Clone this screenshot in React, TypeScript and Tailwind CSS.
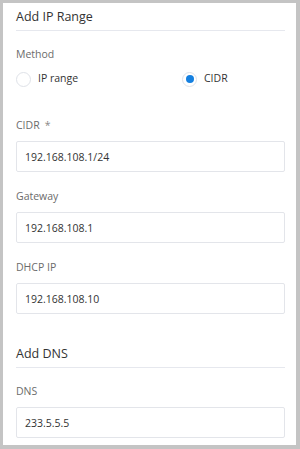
import type { ReactNode } from 'react'

function SectionTitle({ children, className = '' }: { children: ReactNode; className?: string }) {
  return (
    <div className={`border-b border-[#e6e8ee] pb-[3px] ${className}`}>
      <h2 className="text-[12.5px] leading-[20px] text-[#333]">{children}</h2>
    </div>
  )
}

function Field({
  label,
  value,
  required,
  className = '',
}: {
  label: string
  value: string
  required?: boolean
  className?: string
}) {
  return (
    <div className={className}>
      <label className="block text-[10.5px] leading-[16px] text-[#6b6b6b]">
        {label}
        {required && <span className="ml-[5px] text-[#888]">*</span>}
      </label>
      <input
        readOnly
        value={value}
        className="mt-[8px] block h-[31px] w-full rounded-[2px] border border-[#e3e5ea] bg-white px-[8px] text-[10.5px] text-[#333] outline-none"
      />
    </div>
  )
}

function Radio({ label, checked }: { label: string; checked?: boolean }) {
  return (
    <label className="flex items-center gap-[7px]">
      <span className="flex h-[15px] w-[15px] items-center justify-center rounded-full border border-[#dfe2e8] bg-white">
        {checked && <span className="h-[8px] w-[8px] rounded-full bg-[#1580e0]" />}
      </span>
      <span className="text-[10.5px] text-[#333]">{label}</span>
    </label>
  )
}

export default function App() {
  return (
    <div
      className="h-[449px] w-[300px] bg-[#c4c4c4] pb-[4px] pl-[3px] pr-[4px] pt-[3px]"
      style={{ fontFamily: '"Open Sans", "Noto Sans", sans-serif' }}
    >
      <div className="h-full bg-white pl-[13px] pr-[11px] pt-[4px]">
        <SectionTitle>Add IP Range</SectionTitle>

        <div className="mt-[15px] text-[10.5px] leading-[16px] text-[#6b6b6b]">Method</div>
        <div className="mt-[7px] flex h-[20px] items-center">
          <div className="w-[166px]">
            <Radio label="IP range" />
          </div>
          <Radio label="CIDR" checked />
        </div>

        <Field className="mt-[28px]" label="CIDR" value="192.168.108.1/24" required />
        <Field className="mt-[16px]" label="Gateway" value="192.168.108.1" />
        <Field className="mt-[16px]" label="DHCP IP" value="192.168.108.10" />

        <SectionTitle className="mt-[30px]">Add DNS</SectionTitle>
        <Field className="mt-[15px]" label="DNS" value="233.5.5.5" />
      </div>
    </div>
  )
}
